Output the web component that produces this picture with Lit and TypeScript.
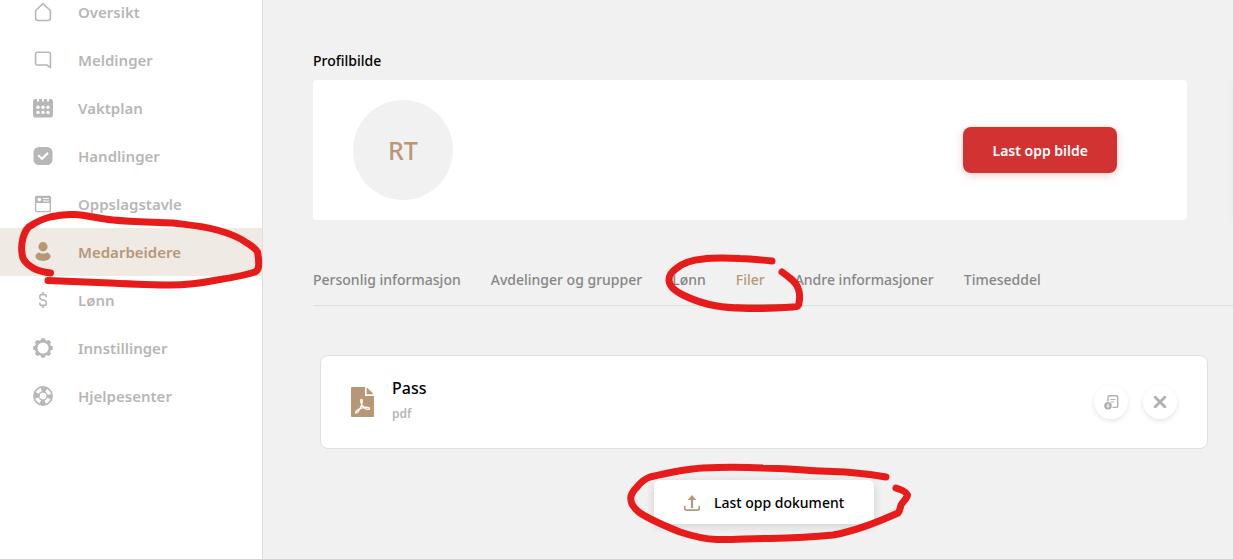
import { LitElement, html, css, svg } from "lit";
import { customElement, property } from "lit/decorators.js";
import { classMap } from "lit/directives/class-map.js";

const icons: Record<string, unknown> = {
  home: svg`<path d="M2.600 8.500 10 1.700l7.400 6.800v7.500a2.500 2.500 0 0 1-2.500 2.500H5.100a2.500 2.500 0 0 1-2.500-2.500z" fill="none" stroke="currentColor" stroke-width="1.600" stroke-linejoin="round"/>`,
  chat: svg`<path d="M4.200 2.200h11.300a1.900 1.900 0 0 1 1.900 1.900v13.500l-3.600-2.600H4.600a2 2 0 0 1-2-2V4.200a2 2 0 0 1 2-2z" fill="none" stroke="currentColor" stroke-width="1.600" stroke-linejoin="round"/>`,
  calendar: svg`<path fill-rule="evenodd" fill="currentColor" d="M2.200 1H4v2.400h2V1h3v2.400h2V1h3v2.400h2V1h1.800A2.200 2.200 0 0 1 20 3.200v13.600a2.800 2.800 0 0 1-2.800 2.800H2.800A2.800 2.800 0 0 1 0 16.800V3.200A2.200 2.200 0 0 1 2.200 1z"/><g fill="#fff"><circle cx="5" cy="9.300" r="1.700"/><circle cx="10" cy="9.300" r="1.700"/><circle cx="15" cy="9.300" r="1.700"/><circle cx="5" cy="14.400" r="1.700"/><circle cx="10" cy="14.400" r="1.700"/><circle cx="15" cy="14.400" r="1.700"/></g>`,
  check: svg`<rect x="0.500" y="1" width="19" height="18" rx="5.500" fill="currentColor"/><path d="m5.200 9.300 3.800 3.400 6-5.800" fill="none" stroke="#fff" stroke-width="2.200"/>`,
  board: svg`<path d="M3.500 1.700h13a1.600 1.600 0 0 1 1.600 1.600V9H1.900V3.300a1.600 1.600 0 0 1 1.600-1.600z" fill="currentColor"/><path d="M2.600 8.500V16a1.600 1.600 0 0 0 1.600 1.600h11.600a1.600 1.600 0 0 0 1.600-1.600V8.500" fill="none" stroke="currentColor" stroke-width="1.400"/><circle cx="6.300" cy="5.600" r="1.800" fill="#fff"/><path d="M10 4.500h6M10 7h6" stroke="#fff" stroke-width="1"/>`,
  person: svg`<ellipse cx="10" cy="4.700" rx="4.600" ry="4.700" fill="currentColor"/><path d="M5.800 10.400C7 11.200 8.500 11.600 10 11.600s3-.4 4.200-1.200c2 .8 3.400 2.400 3.400 3.900 0 2.600-3.400 4.700-7.600 4.700s-7.600-2.100-7.600-4.700c0-1.500 1.400-3.100 3.400-3.900z" fill="currentColor"/>`,
  dollar: svg`<path d="M10 2v3M10 15v3M13.200 7.200V6.500A1.900 1.900 0 0 0 11.300 4.600H8.700a1.900 1.900 0 0 0-1.900 1.900v1c0 1 .6 1.600 1.500 1.900l3.500 1.200c.9.300 1.500 1 1.500 1.900v1a1.900 1.900 0 0 1-1.900 1.900H8.700a1.900 1.900 0 0 1-1.900-1.900v-.8" fill="none" stroke="currentColor" stroke-width="1.600"/>`,
  gear: svg`<circle cx="10" cy="10" r="6.900" fill="none" stroke="currentColor" stroke-width="2.700"/><g fill="currentColor">${[0, 45, 90, 135, 180, 225, 270, 315].map(
    (a) => svg`<path d="M7.500 3.200 8.300 0.200h3.400l.8 3z" transform="rotate(${a} 10 10)"/>`
  )}</g>`,
  help: svg`<circle cx="10" cy="10" r="9.100" fill="none" stroke="currentColor" stroke-width="1.700"/><circle cx="10" cy="10" r="6.200" fill="none" stroke="currentColor" stroke-width="5.200" stroke-dasharray="4.870 4.870" stroke-dashoffset="2.435"/><circle cx="10" cy="10" r="4.200" fill="none" stroke="currentColor" stroke-width="1.200"/>`,
  pdf: svg`<path d="M1 0h13v9H23V29a1 1 0 0 1-1 1H1a1 1 0 0 1-1-1V1a1 1 0 0 1 1-1z" fill="currentColor"/><path d="M15.600.2 22.800 7.200h-7.200z" fill="currentColor"/><path d="M10.500 12.500c-1.600 0-.6 4.100 1 6.200 1.500 2.200 3.700 3.900 5.800 3.700 1.800-.2 1.800-1.900-.6-2.100-3.300-.3-7.800.9-10.300 2.700-2 1.500-2.300 2.800-1.300 2.900 1.900.1 3.500-3.300 5-6.700 1.200-2.800 1.800-6.700.4-6.700z" fill="none" stroke="#fff" stroke-width="1.300"/>`,
  filecopy: svg`<path d="M4 6.500V2A1.200 1.200 0 0 1 5.200 .8H12.500a1.200 1.200 0 0 1 1.200 1.200v9.200a1.200 1.200 0 0 1-1.200 1.200H8.500" fill="none" stroke="currentColor" stroke-width="1.400"/><path d="M6.500 4.500h5M6.500 7h3.500" stroke="currentColor" stroke-width="1"/><circle cx="4" cy="10.700" r="3.800" fill="currentColor"/><path d="M4 8.600v3.600M2.700 11 4 12.300l1.300-1.300" fill="none" stroke="#fff" stroke-width="1"/>`,
  cross: svg`<path d="m2.200 2.200 9.600 9.600m0-9.600-9.600 9.600" stroke="currentColor" stroke-width="2.800" stroke-linecap="round"/>`,
  upload: svg`<path d="M8 13V4" stroke="currentColor" stroke-width="2.200"/><path d="M8 0 12.200 5H3.800z" fill="currentColor"/><path d="M0.800 11v2.300a1.800 1.800 0 0 0 1.800 1.800h10.800a1.800 1.800 0 0 0 1.800-1.800V11" fill="none" stroke="currentColor" stroke-width="1.600"/>`,
};

const icon = (name: string, width: number, height: number) =>
  html`<svg viewBox="0 0 ${width} ${height}" width=${width} height=${height} aria-hidden="true">${icons[name]}</svg>`;

@customElement("side-nav")
class SideNav extends LitElement {
  @property() current = "";

  private items = [
    ["home", "Oversikt"],
    ["chat", "Meldinger"],
    ["calendar", "Vaktplan"],
    ["check", "Handlinger"],
    ["board", "Oppslagstavle"],
    ["person", "Medarbeidere"],
    ["dollar", "Lønn"],
    ["gear", "Innstillinger"],
    ["help", "Hjelpesenter"],
  ];

  static styles = css`
    :host {
      display: block;
      background: #fff;
      border-right: 1px solid #dfdfdf;
    }
    .nav {
      display: flex;
      flex-direction: column;
      margin-top: -12px;
    }
    .item {
      display: flex;
      align-items: center;
      gap: 25px;
      height: 48px;
      padding-left: 33px;
      color: #b7b7b7;
      font-size: 15px;
      font-weight: 600;
      line-height: 20px;
      text-decoration: none;
    }
    .active {
      background: #efeae4;
      color: #b89777;
    }
    svg {
      flex: none;
    }
  `;

  render() {
    return html`<nav class="nav">
      ${this.items.map(
        ([name, label]) => html`<a href="#" class=${classMap({ item: true, active: label === this.current })}>
          ${icon(name, 20, 20)}<span>${label}</span>
        </a>`
      )}
    </nav>`;
  }
}

@customElement("app-root")
class AppRoot extends LitElement {
  private tabs = ["Personlig informasjon", "Avdelinger og grupper", "Lønn", "Filer", "Andre informasjoner", "Timeseddel"];

  static styles = css`
    :host {
      display: grid;
      grid-template-columns: 263px minmax(0, 1fr);
      position: relative;
      min-height: 100vh;
      overflow: hidden;
      background: #f1f1f1;
      color: #000;
      font-family: "Noto Sans", sans-serif;
      font-size: 14px;
      font-weight: 500;
      line-height: 20px;
    }
    * {
      box-sizing: border-box;
    }
    button {
      border: 0;
      font: inherit;
      cursor: pointer;
    }
    .main {
      padding: 51px 0 35px 50px;
    }
    .heading {
      margin: 0;
      font-size: 14px;
      font-weight: 500;
    }
    .profile {
      display: grid;
      grid-template-columns: minmax(0, 1fr) 40px;
      gap: 46px;
      margin: 9px -40px 0 0;
    }
    .card {
      display: flex;
      align-items: center;
      justify-content: space-between;
      padding: 20px 70px 20px 40px;
      border-radius: 4px;
      background: #fff;
    }
    .panel {
      box-shadow: 0 0 12px rgba(0, 0, 0, 0.03);
    }
    .avatar {
      display: grid;
      place-items: center;
      width: 100px;
      height: 100px;
      border-radius: 50%;
      background: #f1f1f1;
      color: #b89777;
      font-size: 25px;
    }
    .primary {
      padding: 14px 29px 12px;
      border-radius: 8px;
      background: #d33232;
      box-shadow: 0 2px 8px rgba(211, 50, 50, 0.25);
      color: #fff;
      font-weight: 600;
    }
    .tabs {
      display: flex;
      gap: 30px;
      margin-top: 50px;
      padding-bottom: 15px;
      border-bottom: 1px solid #dfdfdf;
    }
    .tab {
      position: relative;
      color: #868686;
      text-decoration: none;
      white-space: nowrap;
    }
    .selected {
      color: #b89777;
    }
    .selected::after {
      content: "";
      position: absolute;
      left: 0;
      bottom: -16px;
      width: 48px;
      height: 2px;
      background: #b89777;
    }
    .files {
      display: flex;
      flex-direction: column;
      align-items: center;
      gap: 31px;
      padding: 49px 25px 0 7px;
    }
    .file {
      display: flex;
      align-items: center;
      width: 100%;
      height: 94px;
      padding: 0 30px;
      border: 1px solid #dfdfdf;
      border-radius: 8px;
      background: #fff;
    }
    .doc {
      display: flex;
      color: #b89777;
    }
    .meta {
      flex: 1;
      padding: 0 0 5px 18px;
    }
    .name {
      margin: 0 0 7px;
      font-size: 16px;
      line-height: 22px;
      font-weight: 500;
    }
    .type {
      margin: 0;
      color: #b7b7b7;
      font-size: 12px;
      font-weight: 600;
      line-height: 16px;
    }
    .actions {
      display: flex;
      gap: 15px;
    }
    .round {
      display: grid;
      place-items: center;
      width: 34px;
      height: 34px;
      padding: 0;
      border-radius: 50%;
      background: #fff;
      box-shadow: 0 2px 5px rgba(0, 0, 0, 0.1);
      color: #b0b0b0;
    }
    .upload {
      display: flex;
      align-items: center;
      gap: 14px;
      height: 44px;
      padding: 2px 30px 0;
      border-radius: 6px 6px 0 0;
      background: #fff;
      box-shadow: 0 2px 10px rgba(0, 0, 0, 0.14);
      color: #000;
    }
    .upload svg {
      color: #b89777;
    }
    .marks {
      position: absolute;
      top: 0;
      left: 0;
      pointer-events: none;
    }
  `;

  render() {
    return html`
      <side-nav current="Medarbeidere"></side-nav>
      <main class="main">
        <h2 class="heading">Profilbilde</h2>
        <section class="profile">
          <div class="card">
            <div class="avatar">RT</div>
            <button class="primary">Last opp bilde</button>
          </div>
          <div class="panel"></div>
        </section>
        <nav class="tabs">
          ${this.tabs.map((t) => html`<a href="#" class=${classMap({ tab: true, selected: t === "Filer" })}>${t}</a>`)}
        </nav>
        <section class="files">
          <article class="file">
            <div class="doc">${icon("pdf", 23, 30)}</div>
            <div class="meta">
              <h3 class="name">Pass</h3>
              <p class="type">pdf</p>
            </div>
            <div class="actions">
              <button class="round" aria-label="Last ned">${icon("filecopy", 15, 15)}</button>
              <button class="round" aria-label="Slett">${icon("cross", 14, 14)}</button>
            </div>
          </article>
          <button class="upload">${icon("upload", 16, 16)}<span>Last opp dokument</span></button>
        </section>
      </main>
      <svg class="marks" width="1233" height="559" viewBox="0 0 1233 559" fill="none" stroke="#e81b1b" stroke-width="7" stroke-linecap="round" stroke-linejoin="round" aria-hidden="true">
        <path d="M50.500 273C43 272 38 271 33 268C26 264 22 259 22 253C21 247 22 242 23 238C25 231 27 227 32 225C38 221 43 219 50 217C58 215 65 214 74 214.500C88 215 99 219 113 220C133 222 154 222 173 223C189 225 203 226 217 230C228 233 239 237 247 243C252 246 256 249 257.500 252C258.500 257 259 262 258.500 267C258 270 257 271 255 272C243 276 230 278 217 280C202 283 186 285 170 285C150 285 130 284 110 283L48 280.500"/>
        <path d="M772 261C761 260 751 258.500 740 258.500C728 258 715 257.500 703 259C693 260 683 263 677 268C671 272 669 275 669 280C669 286 675 291 683 295C693 300 704 304 717 306C728 308 739 308 750 308.500C765 309 779 308 793 307C797 307 799 306 799 303C800 298 800 293 798 288C796 282 789 277 782 272"/>
        <path d="M886 477C868 474 851 472 833 471.500C809 471 786 468 763 468C743 467 723 467 703 468C685 469 667 473 650 477C644 479 641 482 637 487C632 492 630 496 631 500C631 505 635 509 640 513C651 520 665 526 680 532C692 536 704 539 717 539.500C735 540 752 538 770 538.500C791 538 812 537 833 535C856 531 878 522 898 513C900 511 900 508 901 505C903 501 907 499 907.500 495C906 491 901 490 896 488"/>
      </svg>
    `;
  }
}
